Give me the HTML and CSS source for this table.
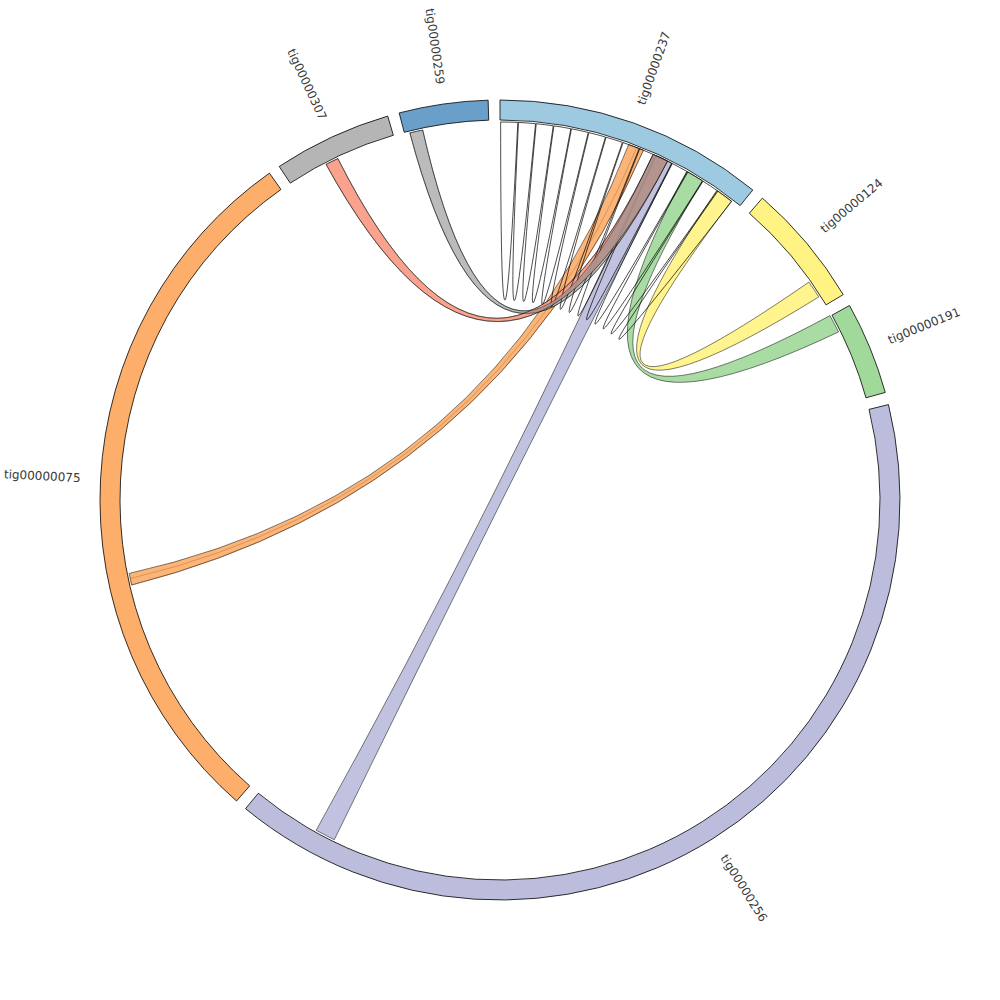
FILE: index.html
```html
<!DOCTYPE html>
<html>
<head>
<meta charset="utf-8">
<title>Contig chord diagram</title>
<link rel="stylesheet" href="styles.css">
</head>
<body>
<svg class="chart" width="1000" height="1000" viewBox="0 0 1000 1000">
  <defs>
    <clipPath id="clip-gray"><path id="clip-gray-path" d=""/></clipPath>
  </defs>
  <g transform="translate(500,500)">
    <g id="groups"></g>
    <g id="ribbons"></g>
    <g id="loops"></g>
    <g id="overlay"></g>
    <g class="labels">
      <text class="label" dy=".35em" transform="rotate(-70.4) translate(420,0)">tig00000237</text>
      <text class="label" dy=".35em" transform="rotate(-39.95) translate(420,0)">tig00000124</text>
      <text class="label" dy=".35em" transform="rotate(-22.35) translate(420,0)">tig00000191</text>
      <text class="label" dy=".35em" transform="rotate(57.85) translate(420,0)">tig00000256</text>
      <text class="label label-end" dy=".35em" transform="rotate(183) translate(420,0) rotate(180)">tig00000075</text>
      <text class="label label-end" dy=".35em" transform="rotate(245.1) translate(420,0) rotate(180)">tig00000307</text>
      <text class="label label-end" dy=".35em" transform="rotate(261.85) translate(420,0) rotate(180)">tig00000259</text>
    </g>
  </g>
</svg>
<script src="script.js"></script>
</body>
</html>
```

FILE: styles.css
```css
html, body {
  margin: 0;
  padding: 0;
  background: #ffffff;
}

.chart {
  display: block;
}

.group {
  stroke: #000;
  stroke-width: 0.8;
}

.c237 { fill: #9ecae1; }
.c124 { fill: #fff383; }
.c191 { fill: #a1d99b; }
.c256 { fill: #bcbddc; }
.c075 { fill: #fdae6b; }
.c307 { fill: #b5b5b5; }
.c259 { fill: #6a9fca; }
.csalmon { fill: #fb9a85; }

.ribbon {
  stroke: #000;
  stroke-width: 0.5;
  fill-opacity: 0.92;
}

.ribbon-line {
  fill: none;
  stroke: #7a4a20;
  stroke-width: 0.5;
  stroke-opacity: 0.6;
}

.overlap {
  fill: #ac938e;
  fill-opacity: 0.9;
  stroke: none;
}

.outline {
  fill: none;
  stroke: #222;
  stroke-width: 0.45;
}

.loop {
  fill: none;
  stroke: #000;
  stroke-width: 0.7;
}

.label {
  font-family: "DejaVu Sans", sans-serif;
  font-size: 12px;
  fill: #3a3a3a;
}

.label-end {
  text-anchor: end;
}
```

FILE: script.js
```js
(function () {
  var NS = 'http://www.w3.org/2000/svg';
  var R0 = 380, R1 = 400, RC = 378, CT = 22;

  function P(r, a) {
    var t = a * Math.PI / 180;
    return [r * Math.sin(t), -r * Math.cos(t)];
  }
  function f(p) { return p[0].toFixed(2) + ',' + p[1].toFixed(2); }
  function big(a0, a1) { return (a1 - a0) > 180 ? 1 : 0; }

  function groupPath(a0, a1) {
    return 'M' + f(P(R1, a0)) +
      'A' + R1 + ',' + R1 + ' 0 ' + big(a0, a1) + ' 1 ' + f(P(R1, a1)) +
      'L' + f(P(R0, a1)) +
      'A' + R0 + ',' + R0 + ' 0 ' + big(a0, a1) + ' 0 ' + f(P(R0, a0)) + 'Z';
  }
  function ctrl(a, b) {
    var u = P(1, a), v = P(1, b);
    return [(u[0] + v[0]) * CT / 2, (u[1] + v[1]) * CT / 2];
  }
  function ribbon(s0, s1, t0, t1) {
    return 'M' + f(P(RC, s0)) +
      'A' + RC + ',' + RC + ' 0 0 1 ' + f(P(RC, s1)) +
      'Q' + f(ctrl(s1, t0)) + ' ' + f(P(RC, t0)) +
      'A' + RC + ',' + RC + ' 0 0 1 ' + f(P(RC, t1)) +
      'Q' + f(ctrl(t1, s0)) + ' ' + f(P(RC, s0)) + 'Z';
  }
  function loop(a, b) {
    return 'M' + f(P(RC, a)) +
      'A' + RC + ',' + RC + ' 0 0 1 ' + f(P(RC, b)) +
      'Q' + f(ctrl(b, a)) + ' ' + f(P(RC, a)) + 'Z';
  }
  function add(parent, d, cls) {
    var e = document.createElementNS(NS, 'path');
    e.setAttribute('d', d);
    e.setAttribute('class', cls);
    parent.appendChild(e);
    return e;
  }

  var groups = [
    ['c237', 0, 39.2],
    ['c124', 41.0, 59.1],
    ['c191', 60.9, 74.4],
    ['c256', 76.2, 219.5],
    ['c075', 221.2, 324.8],
    ['c307', 326.5, 343.7],
    ['c259', 345.4, 358.3]
  ];
  var gG = document.getElementById('groups');
  groups.forEach(function (g) { add(gG, groupPath(g[1], g[2]), 'group ' + g[0]); });

  var gR = document.getElementById('ribbons');
  add(gR, ribbon(24.2, 27.1, 206.0, 209.1), 'ribbon c256');
  add(gR, ribbon(19.9, 22.3, 257.0, 258.8), 'ribbon c075');
  add(gR, ribbon(21.2, 22.3, 257.0, 258.0), 'ribbon-line');
  add(gR, ribbon(29.6, 32.4, 60.8, 63.6), 'ribbon c191');
  add(gR, ribbon(35.0, 37.75, 54.8, 57.5), 'ribbon c124');

  var grayD = ribbon(346.2, 348.2, 23.9, 26.3);
  var salmonD = ribbon(332.6, 334.6, 23.9, 26.3);
  add(gR, grayD, 'ribbon c307');
  add(gR, salmonD, 'ribbon csalmon');
  document.getElementById('clip-gray-path').setAttribute('d', grayD);

  var gL = document.getElementById('loops');
  var step = 2.7;
  for (var k = 0; k < 14; k++) {
    add(gL, loop(k * step + 0.1, (k + 1) * step), 'loop');
  }

  var gO = document.getElementById('overlay');
  var ov = add(gO, salmonD, 'overlap');
  ov.setAttribute('clip-path', 'url(#clip-gray)');
  add(gO, grayD, 'outline');
  add(gO, salmonD, 'outline');
})();
```
